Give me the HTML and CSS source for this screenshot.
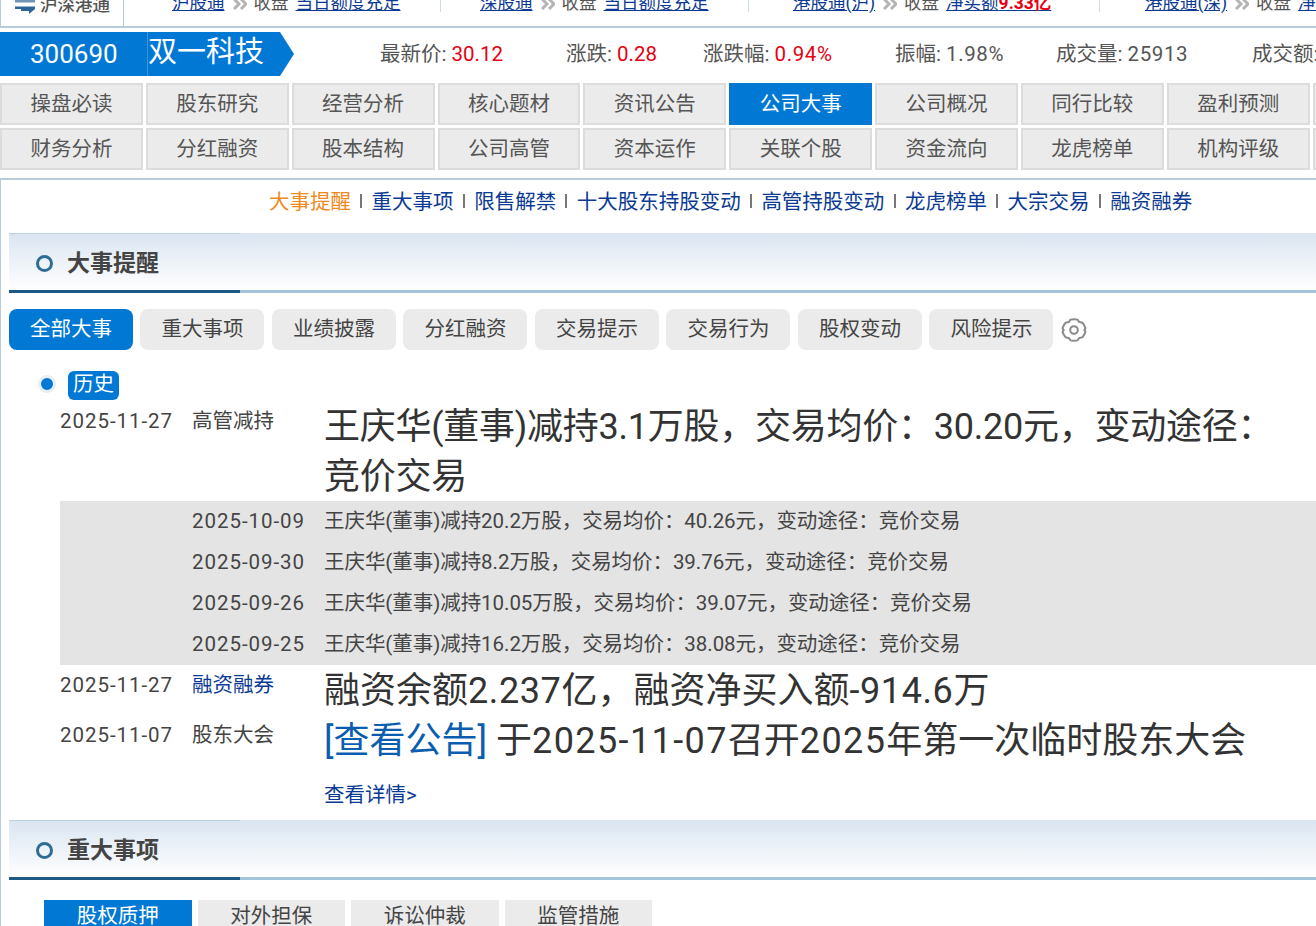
FILE: index.html
```html
<!DOCTYPE html>
<html lang="zh-CN">
<head>
<meta charset="utf-8">
<title>双一科技 公司大事</title>
<link rel="stylesheet" href="styles.css">
</head>
<body>
<header class="market">
  <div class="market-logo">
    <svg class="market-icon" width="22" height="14" viewBox="0 0 22 14"><path d="M1 0h20v2.500H1z" fill="#6f93b5"/><path d="M1 6.500h20v2.500H1z" fill="#2f6496"/><path d="M7 9h14l-6 5v-3H7z" fill="#2f6496"/></svg>
    <span>沪深港通</span>
  </div>
  <div class="market-item m1"><a>沪股通</a><svg class="chev" width="14" height="12" viewBox="0 0 14 12"><path d="M1 1l5 5-5 5M8 1l5 5-5 5" fill="none" stroke="#b4b4b4" stroke-width="3"/></svg><span>收盘</span><a>当日额度充足</a></div>
  <div class="market-item m2"><a>深股通</a><svg class="chev" width="14" height="12" viewBox="0 0 14 12"><path d="M1 1l5 5-5 5M8 1l5 5-5 5" fill="none" stroke="#b4b4b4" stroke-width="3"/></svg><span>收盘</span><a>当日额度充足</a></div>
  <div class="market-item m3"><a>港股通(沪)</a><svg class="chev" width="14" height="12" viewBox="0 0 14 12"><path d="M1 1l5 5-5 5M8 1l5 5-5 5" fill="none" stroke="#b4b4b4" stroke-width="3"/></svg><span>收盘</span><a>净买额<b>9.33亿</b></a></div>
  <div class="market-item m4"><a>港股通(深)</a><svg class="chev" width="14" height="12" viewBox="0 0 14 12"><path d="M1 1l5 5-5 5M8 1l5 5-5 5" fill="none" stroke="#b4b4b4" stroke-width="3"/></svg><span>收盘</span><a>净买额</a></div>
</header>

<section class="quote">
  <div class="stock">
    <div class="stock-code">300690</div>
    <div class="stock-name">双一科技</div>
  </div>
  <div class="stats">
    <div>最新价: <em>30.12</em></div>
    <div>涨跌: <em>0.28</em></div>
    <div>涨跌幅: <em class="wide">0.94%</em></div>
    <div>振幅: <span class="wide">1.98%</span></div>
    <div>成交量: <span class="wide">25913</span></div>
    <div>成交额: 7842万</div>
  </div>
</section>

<nav class="nav">
  <a>操盘必读</a><a>股东研究</a><a>经营分析</a><a>核心题材</a><a>资讯公告</a><a class="on">公司大事</a><a>公司概况</a><a>同行比较</a><a>盈利预测</a><a></a>
  <a>财务分析</a><a>分红融资</a><a>股本结构</a><a>公司高管</a><a>资本运作</a><a>关联个股</a><a>资金流向</a><a>龙虎榜单</a><a>机构评级</a><a></a>
</nav>

<main class="panel">
  <div class="subnav">
    <a class="cur">大事提醒</a><i></i><a>重大事项</a><i></i><a>限售解禁</a><i></i><a>十大股东持股变动</a><i></i><a>高管持股变动</a><i></i><a>龙虎榜单</a><i></i><a>大宗交易</a><i></i><a>融资融券</a>
  </div>

  <div class="section-head"><span class="ring"></span><h2>大事提醒</h2></div>

  <div class="tabs">
    <a class="on">全部大事</a><a>重大事项</a><a>业绩披露</a><a>分红融资</a><a>交易提示</a><a>交易行为</a><a>股权变动</a><a>风险提示</a>
    <svg class="gear" width="26" height="26" viewBox="0 0 26 26" fill="none" stroke="#8a8a8a" stroke-width="2"><path d="M9.600 2.600c1.200-.5 5.600-.5 6.800 0 .9.400 1 1.800 1.700 2.300.7.500 2.100.100 3 .7 1.100.7 3.200 4.400 3.300 5.700.1 1-1.100 1-1.100 1.700s1.200.7 1.100 1.700c-.1 1.300-2.200 5-3.300 5.700-.9.600-2.300.2-3 .7-.7.500-.8 1.900-1.700 2.300-1.200.5-5.600.5-6.800 0-.9-.4-1-1.800-1.700-2.300-.7-.5-2.100-.1-3-.7-1.100-.7-3.200-4.400-3.300-5.700-.1-1 1.100-1 1.100-1.700s-1.200-.7-1.100-1.700c.1-1.300 2.200-5 3.300-5.700.9-.6 2.300-.2 3-.7.700-.5.800-1.900 1.700-2.300z" stroke-linejoin="round"/><circle cx="13" cy="13" r="3.800"/></svg>
  </div>

  <div class="history"><span class="dot"></span><span class="badge">历史</span></div>

  <div class="event first">
    <div class="date">2025-11-27</div><div class="type">高管减持</div>
    <div class="big tight">王庆华(董事)减持3.1万股，交易均价：30.20元，变动途径：竞价交易</div>
  </div>
  <div class="grey">
    <div class="grey-row"><span class="date-text">2025-10-09</span><span class="grey-text">王庆华(董事)减持20.2万股，交易均价：40.26元，变动途径：竞价交易</span></div>
    <div class="grey-row"><span class="date-text">2025-09-30</span><span class="grey-text">王庆华(董事)减持8.2万股，交易均价：39.76元，变动途径：竞价交易</span></div>
    <div class="grey-row"><span class="date-text">2025-09-26</span><span class="grey-text">王庆华(董事)减持10.05万股，交易均价：39.07元，变动途径：竞价交易</span></div>
    <div class="grey-row"><span class="date-text">2025-09-25</span><span class="grey-text">王庆华(董事)减持16.2万股，交易均价：38.08元，变动途径：竞价交易</span></div>
  </div>
  <div class="event">
    <div class="date">2025-11-27</div><div class="type link">融资融券</div>
    <div class="big">融资余额<span class="num">2.237</span>亿，融资净买入额<span class="num">-914.6</span>万</div>
  </div>
  <div class="event">
    <div class="date">2025-11-07</div><div class="type">股东大会</div>
    <div class="big"><a class="notice">[查看公告]</a> 于<span class="num-wide">2025-11-07</span>召开<span class="num-wide">2025</span>年第一次临时股东大会</div>
  </div>
  <div class="more"><a>查看详情&gt;</a></div>

  <div class="section-head"><span class="ring"></span><h2>重大事项</h2></div>
  <div class="subtabs"><a class="on">股权质押</a><a>对外担保</a><a>诉讼仲裁</a><a>监管措施</a></div>
</main>
</body>
</html>
```
FILE: styles.css
```css
* { box-sizing: border-box; }
html, body { margin: 0; height: 926px; overflow: hidden; background: #fff; }
body { width: 1316px; font-family: Roboto, "Noto Sans CJK SC", sans-serif; color: #444; font-size: 20.5px; }
a { cursor: pointer; }

.market { display: flex; align-items: flex-start; height: 28px; overflow: hidden; border-bottom: 2px solid #b7cbdc; font-size: 17.5px; line-height: 17px; }
.market-logo { width: 124px; height: 26px; flex: none; display: flex; align-items: flex-start; padding-left: 13px; gap: 4px; border-left: 1px solid #b7cbdc; border-right: 1px solid #b7cbdc; font-weight: 500; color: #555; white-space: nowrap; }
.market-logo span { margin-top: -3px; }
.market-icon { flex: none; }
.market-item { display: flex; align-items: flex-start; flex: none; margin-top: -5px; height: 17px; white-space: nowrap; border-right: 1px solid #cfdbe6; color: #555; }
.market-item a { color: #0b3a94; text-decoration: underline; }
.market-item b { color: #e60012; font-weight: 700; }
.chev { flex: none; margin: 3px 7px 0 8px; }
.market-item span { margin-right: 7px; }
.m1 { width: 269px; margin-left: 48px; }
.m2 { width: 308px; padding-left: 39px; }
.m3 { width: 351px; padding-left: 44px; }
.m4 { width: 220px; padding-left: 45px; border: 0; }

.quote { display: flex; margin-top: 4px; height: 44px; align-items: flex-start; white-space: nowrap; }
.stock { width: 380px; flex: none; display: flex; align-items: stretch; height: 44px; color: #fff; }
.stock-code { width: 148px; background: #0078d4; font-size: 26px; line-height: 44px; padding-left: 30px; border-right: 1px solid #3c96dc; }
.stock-name { width: 146px; background: #0078d4; font-size: 29px; line-height: 41px; clip-path: polygon(0 0, 132px 0, 146px 50%, 132px 100%, 0 100%); }
.stats { display: grid; grid-template-columns: 186px 137px 192px 161px 196px 200px; line-height: 44px; color: #555; }
.stats em { font-style: normal; color: #e60012; }
.stats .wide { letter-spacing: .6px; }

.nav { display: grid; grid-template-columns: repeat(10, 142.85px); gap: 3px; margin-top: 7px; width: 1460px; }
.nav a { height: 42px; background: #ebebeb; border: 2px solid #dcdcdc; text-align: center; line-height: 38px; color: #555; }
.nav a.on { background: #0078d4; border-color: #0078d4; color: #fff; }

.panel { margin-top: 8px; border-top: 2px solid #b7cbdc; border-left: 1px solid #b7cbdc; padding-left: 8px; }
.subnav { display: flex; align-items: center; height: 44px; padding: 0 0 5px 260px; color: #0b3a94; }
.subnav a { white-space: nowrap; }
.subnav .cur { color: #f08a1d; }
.subnav i { width: 2px; height: 14px; background: #777; margin: 2px 9.3px 0; }

.section-head { position: relative; display: flex; align-items: center; height: 60px; margin-top: 9px; padding-left: 27px; background: linear-gradient(#dae5f1, #fff); border-bottom: 3px solid #a2c5dc; }
.section-head::before { content: ""; position: absolute; left: 0; bottom: -3px; width: 231px; height: 3px; background: #1d5a83; }
.section-head::after { content: ""; position: absolute; left: 0; top: 0; width: 231px; height: 1px; background: #bdd0e0; }
.ring { width: 17px; height: 17px; margin-top: 3px; border: 3px solid #2d6c94; border-radius: 50%; }
.section-head h2 { margin: -1px 0 0 14px; font-size: 23px; font-weight: 700; color: #444; }

.tabs { display: flex; align-items: center; gap: 7.49px; margin-top: 16px; }
.tabs a { flex: none; width: 124px; height: 41px; border-radius: 8px; background: #ebebeb; text-align: center; line-height: 40px; color: #444; }
.tabs a.on { background: #0078d4; color: #fff; }

.history { display: flex; align-items: flex-start; margin: 21px 0 0 29px; height: 29px; }
.dot { width: 18px; height: 18px; margin-top: 4px; border-radius: 50%; background: #0078d4; border: 3px solid #e8eef4; }
.badge { margin-left: 12px; width: 51px; height: 29px; background: #0078d4; color: #fff; border-radius: 6px; text-align: center; line-height: 27px; }

.event { display: grid; grid-template-columns: 132px 132px 960px; margin-left: 51px; }
.event.first { padding-top: 1px; }
.date, .type { padding-top: 6px; line-height: 28px; }
.date, .date-text { letter-spacing: .95px; }
.type.link { color: #0b3a94; }
.big { font-size: 36px; line-height: 50px; color: #333; padding-top: 1px; margin-bottom: -1px; }
.big.tight { letter-spacing: -.25px; }
.num { letter-spacing: .6px; }
.num-wide { letter-spacing: 1.4px; }
.notice { color: #0b5db0; }

.grey { background: #e4e4e4; margin-left: 51px; height: 164px; padding-left: 132px; }
.grey-row { display: grid; grid-template-columns: 132px auto; height: 41px; line-height: 40px; }
.grey-text { letter-spacing: -.06px; }

.more { margin-left: 315px; height: 46px; padding-top: 15px; line-height: 30px; color: #0b3a94; }
.more + .section-head { margin-top: 9px; }

.subtabs { display: flex; gap: 6px; margin: 20px 0 0 35px; }
.subtabs a { width: 147.5px; height: 30px; background: #ebebeb; text-align: center; line-height: 32px; color: #444; }
.subtabs a.on { background: #0078d4; color: #fff; }
```
